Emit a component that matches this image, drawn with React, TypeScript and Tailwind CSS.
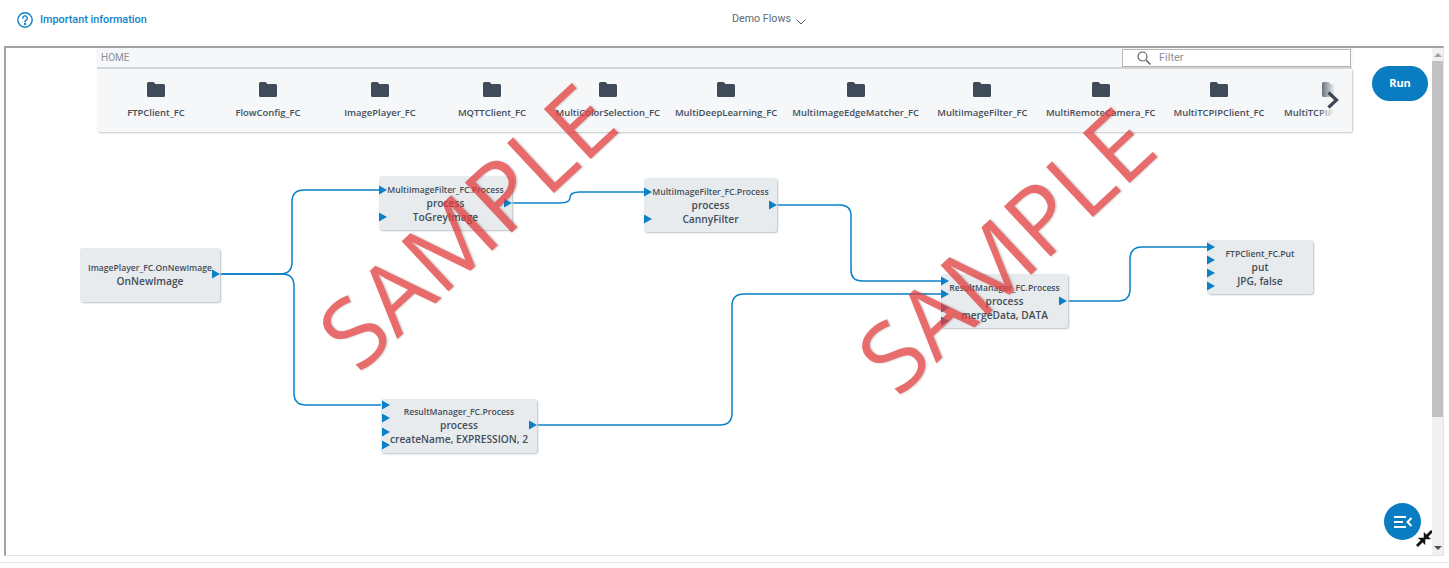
import React from "react";

const BLUE = "#0a80c8";
const items = [
  "FTPClient_FC", "FlowConfig_FC", "ImagePlayer_FC", "MQTTClient_FC", "MultiColorSelection_FC", "MultiDeepLearning_FC",
  "MultiImageEdgeMatcher_FC", "MultiImageFilter_FC", "MultiRemoteCamera_FC", "MultiTCPIPClient_FC", "MultiTCPIPServer_FC",
];

const nodes = [
  { cls: "left-[74px] top-[200px] w-[140px] pt-[14px]", title: "ImagePlayer_FC.OnNewImage", lines: ["OnNewImage"] },
  { cls: "left-[373px] top-[128px] w-[133px] pt-[8px]", title: "MultiImageFilter_FC.Process", lines: ["process", "ToGreyImage"] },
  { cls: "left-[638px] top-[130px] w-[133px] pt-[8px]", title: "MultiImageFilter_FC.Process", lines: ["process", "CannyFilter"] },
  { cls: "left-[375px] top-[351px] w-[156px] pt-[7px]", title: "ResultManager_FC.Process", lines: ["process", "createName, EXPRESSION, 2"] },
  { cls: "left-[935px] top-[226px] w-[127px] pt-[8px]", title: "ResultManager_FC.Process", lines: ["process", "mergeData, DATA"] },
  { cls: "left-[1201px] top-[192px] w-[106px] pt-[8px]", title: "FTPClient_FC.Put", lines: ["put", "JPG, false"] },
];

const wires = [
  "M210 226H274Q286 226 286 214V154Q286 142 298 142H374",
  "M210 226H276Q288 226 288 238V345Q288 357 300 357H376",
  "M502 155H554Q564 155 564 149.5Q564 144 574 144H638",
  "M767 157H834Q845 157 845 168V222Q845 233 856 233H936",
  "M527 377H714Q726 377 726 365V258Q726 246 738 246H936",
  "M1057 253H1112Q1124 253 1124 241V211Q1124 199 1136 199H1202",
];

const ports: [number, number][] = [
  [206, 226], [373, 142], [373, 169], [498, 155], [638, 144], [638, 171], [763, 157],
  [376, 357], [376, 370], [376, 384], [376, 397], [523, 377],
  [935, 233], [935, 246], [935, 260], [935, 273], [1053, 253],
  [1201, 199], [1201, 212], [1201, 225], [1201, 238],
];

function Folder() {
  return (
    <svg width="18" height="15" viewBox="0 0 18 15" className="block">
      <path d="M1.5 0H6.5L8.5 2H16.5A1.5 1.5 0 0 1 18 3.5V13.5A1.5 1.5 0 0 1 16.5 15H1.5A1.5 1.5 0 0 1 0 13.5V1.5A1.5 1.5 0 0 1 1.5 0Z" fill="#3f4b58" />
    </svg>
  );
}

function Watermark({ cls }: { cls: string }) {
  return (
    <div className={`absolute pointer-events-none z-20 whitespace-nowrap text-[#e23b3b] opacity-75 -rotate-[43deg] font-['Open_Sans',sans-serif] font-medium text-[96px] leading-none [text-shadow:1px_1px_2px_rgba(0,0,0,0.25)] ${cls}`}>
      SAMPLE
    </div>
  );
}

export default function App() {
  return (
    <div className="w-[1449px] h-[568px] overflow-hidden bg-white flex flex-col font-['Open_Sans',sans-serif]">
      <header className="h-[46px] shrink-0 relative flex items-start justify-center pt-[11px]">
        <div className="absolute left-[17px] top-[11px] flex items-center gap-[7px] text-[#0f82c6]">
          <svg width="16" height="16" viewBox="0 0 16 16" fill="none" stroke="currentColor" strokeWidth="1.4">
            <circle cx="8" cy="8" r="7.2" />
            <path d="M5.8 6.2A2.2 2.2 0 1 1 8.9 8.1Q8 8.6 8 9.8" strokeLinecap="round" />
            <circle cx="8" cy="12" r="0.5" fill="currentColor" />
          </svg>
          <span className="font-['Roboto',sans-serif] font-medium text-[10.8px] leading-4 mt-[1px]">Important information</span>
        </div>
        <div className="ml-[89px] flex items-center gap-[5px] text-[#606a73] font-['Roboto',sans-serif] text-[10.7px] leading-4">
          <span>Demo Flows</span>
          <svg width="10" height="6" viewBox="0 0 10 6" fill="none" stroke="#4c5660" strokeWidth="1" className="mt-[5px]">
            <path d="M0.5 0.5L5 5L9.5 0.5" />
          </svg>
        </div>
      </header>

      <main className="ml-[4px] w-[1440px] h-[510px] shrink-0 border-t-2 border-l-2 border-b border-r border-t-[#a2a2a2] border-l-[#a2a2a2] border-b-[#e4e4e4] border-r-[#e4e4e4] flex">
        <div className="relative flex-1 flex items-start overflow-hidden">
          <section className="ml-[91px] w-[1255px] shrink-0">
            <div className="h-[20px] bg-[#f6f7f9] border-b border-[#cfd2d4] shadow-[0_1px_1px_#d8dadc] flex items-center justify-between pl-[4px] pr-[1px]">
              <span className="font-['Roboto',sans-serif] text-[10px] text-[#8a9097]">HOME</span>
              <div className="w-[229px] h-[18px] bg-white border border-[#b4b4b4] flex items-center pl-[14px] gap-[8px]">
                <svg width="14" height="14" viewBox="0 0 14 14" fill="none" stroke="#5a6269" strokeWidth="1.2">
                  <circle cx="5.5" cy="5.5" r="4.5" />
                  <path d="M9 9L13.5 13.5" strokeWidth="1.5" />
                </svg>
                <span className="font-['Roboto',sans-serif] text-[11px] leading-4 mt-[1px] text-[#8a8f94]">Filter</span>
              </div>
            </div>
            <div className="relative mt-[1px] h-[63px] bg-[#f6f7f9] rounded-b-[2px] shadow-[1px_1px_2px_#c4c7ca] overflow-hidden flex pl-[3px] w-[1255px]">
              {items.map((t) => (
                <div key={t} className="min-w-[112px] px-[7.5px] shrink-0 flex flex-col items-center pt-[13px]">
                  <Folder />
                  <span className="mt-[9px] text-[9.45px] leading-[13px] font-semibold text-[#444e59] whitespace-nowrap">{t}</span>
                </div>
              ))}
              <div className="absolute right-0 top-0 bottom-0 w-[34px] bg-gradient-to-r from-transparent via-[#f6f7f9] to-[#f6f7f9]" />
              <svg width="14" height="20" viewBox="0 0 14 20" fill="none" stroke="#3c4752" strokeWidth="3.2" className="absolute left-[1229px] top-[21px]">
                <path d="M2.5 2.5L10.5 10L2.5 17.5" />
              </svg>
            </div>
          </section>

          <button className="ml-[20px] mt-[18px] w-[56px] h-[35px] shrink-0 rounded-full bg-[#0a7cc1] text-white text-[11px] font-bold">Run</button>

          <svg className="absolute left-0 top-0 z-0" width="1430" height="510" fill="none" stroke={BLUE} strokeWidth="1.5">
            {wires.map((d, i) => <path key={i} d={d} />)}
          </svg>

          {nodes.map((n, i) => (
            <div key={i} className={`absolute z-[1] h-[54px] rounded-[3px] bg-[#e7ebee] shadow-[1px_1px_2px_#bcc0c4] text-center text-[#444e59] font-semibold ${n.cls}`}>
              <div className="text-[8.6px] leading-[13px] whitespace-nowrap">{n.title}</div>
              {n.lines.map((l) => <div key={l} className="text-[10.2px] leading-[13.5px] whitespace-nowrap">{l}</div>)}
            </div>
          ))}

          <svg className="absolute left-0 top-0 z-10" width="1430" height="510">
            {ports.map(([x, y], i) => (
              <path key={i} d={`M${x} ${y - 4.5}L${x + 8} ${y}L${x} ${y + 4.5}Z`} fill={BLUE} />
            ))}
          </svg>

          <Watermark cls="left-[279px] top-[129px]" />
          <Watermark cls="left-[818px] top-[153px]" />

          <button className="absolute z-30 left-[1378px] top-[455px] w-[37px] h-[37px] rounded-full bg-[#0a7cc1] flex items-center justify-center">
            <svg width="20" height="14" viewBox="0 0 20 14" fill="none" stroke="white" strokeWidth="2">
              <path d="M1 2H13M1 7H10M1 12H13" />
              <path d="M18.5 3L14.5 7L18.5 11" />
            </svg>
          </button>
          <svg className="absolute z-30 left-[1410px] top-[482px]" width="17" height="17" viewBox="0 0 17 17" fill="#111" stroke="#111">
            <path d="M1 16L6 11" strokeWidth="2.8" />
            <path d="M2.5 8H9V14.5Z" strokeWidth="0.5" />
            <path d="M16 1L11 6" strokeWidth="2.8" />
            <path d="M8 2.5V9H14.5Z" strokeWidth="0.5" />
          </svg>
        </div>

        <div className="w-[11px] shrink-0 bg-[#f1f1f1] flex flex-col items-center justify-between py-[5px] relative">
          <div className="w-0 h-0 border-x-[4px] border-x-transparent border-b-[4px] border-b-[#a0a0a0]" />
          <div className="absolute left-0 right-0 top-[13px] h-[356px] bg-[#c1c1c1]" />
          <div className="w-0 h-0 border-x-[4px] border-x-transparent border-t-[4px] border-t-[#505050]" />
        </div>
      </main>

      <footer className="mt-[6px] h-[6px] border-t border-[#e6e6e6] bg-white" />
    </div>
  );
}
